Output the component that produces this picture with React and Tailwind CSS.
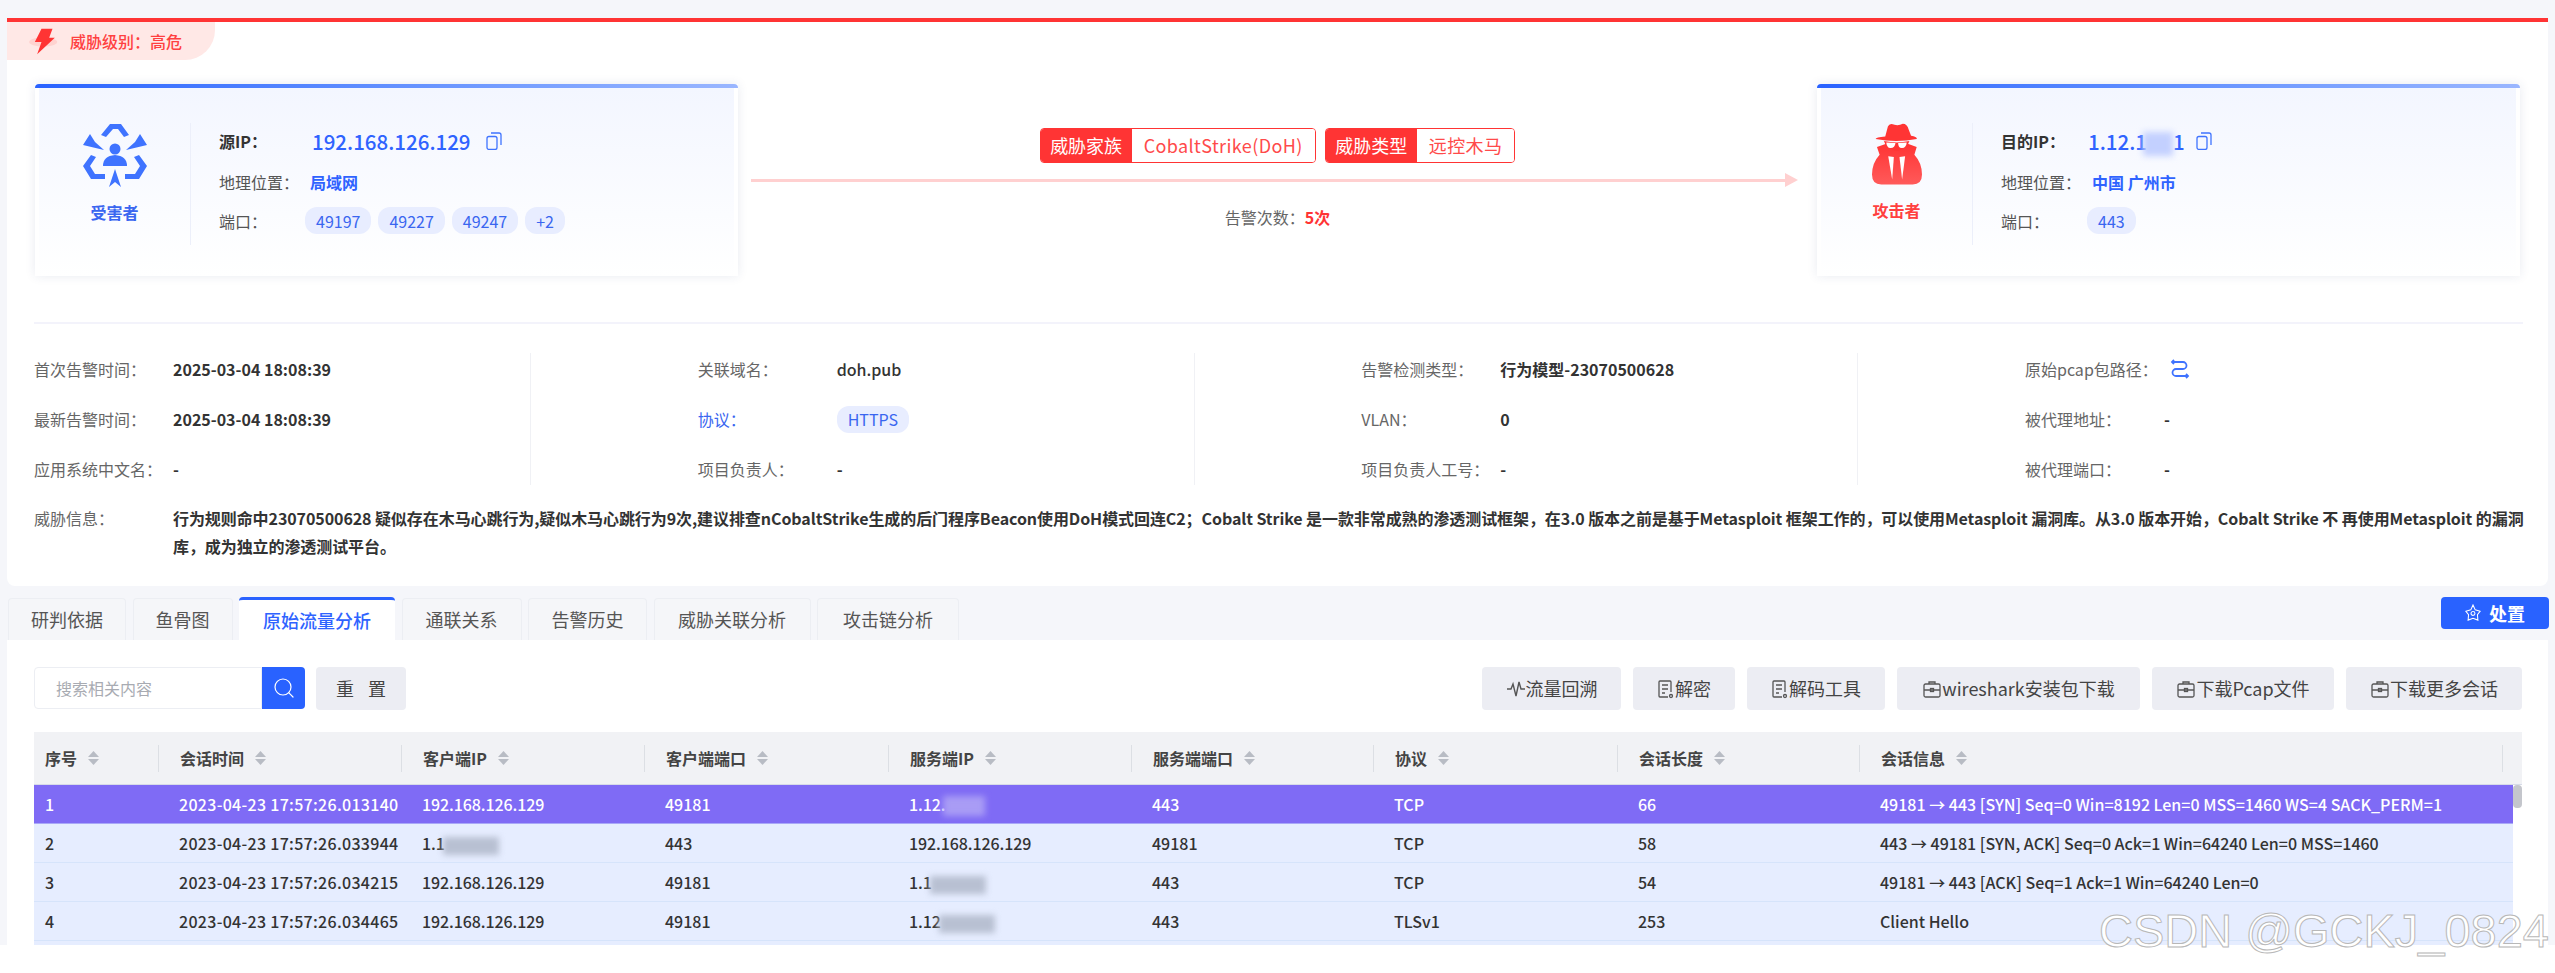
import React from "react";
import { Search } from "lucide-react";

const BoltIcon = () => (
  <svg viewBox="85 80 95 90" className="w-[32px] h-[30px] shrink-0">
    <ellipse cx="130" cy="128" rx="42" ry="14" fill="#ffd3d0" />
    <polygon points="125,88 158,88 148,115 165,115 112,165 125,128 105,128" fill="#ff3434" />
  </svg>
);

const VictimIcon = () => (
  <svg viewBox="0 0 64 64" className="w-[64px] h-[64px]" fill="#3f73ff">
    <polygon points="18,12 27,1 38,1 46,12 41,14 35,6 30,6 23,14" />
    <polygon points="0,22 7,11 12,19 21,27" />
    <polygon points="64,22 57,11 52,19 43,27" />
    <polygon points="32,46 26,64 32,59 38,64" />
    <polygon points="8,32 0,43 8,56 22,56 22,51 12,51 7,43 13,34" />
    <polygon points="56,32 64,43 56,56 42,56 42,51 52,51 57,43 51,34" />
    <circle cx="32" cy="26" r="5.5" />
    <path d="M20 43 Q20 33 32 32 Q44 33 44 43 Z" />
  </svg>
);

const AttackerIcon = () => (
  <svg viewBox="97 70 151 186" className="w-[50px] h-[62px]">
    <defs>
      <linearGradient id="coat" x1="0" y1="0" x2="0" y2="1">
        <stop offset="0" stopColor="#ff3434" />
        <stop offset="1" stopColor="#ff5a5a" />
      </linearGradient>
    </defs>
    <path fill="#ff3434" d="M137 110 L145 80 Q150 68 165 75 Q178 78 190 72 Q203 72 208 90 L215 108 Q235 112 232 118 Q170 130 108 118 Q107 112 137 110 Z" />
    <path fill="#ff3434" d="M133 124 Q172 132 210 124 L205 135 Q190 165 172 165 Q150 165 138 135 Z" />
    <path fill="url(#coat)" d="M120 165 Q97 190 97 225 Q97 255 125 255 L220 255 Q248 255 248 225 Q248 190 225 165 L232 142 L205 132 Q172 175 140 132 L112 142 Z" />
    <path fill="#fff" d="M140 128 L168 130 Q166 146 152 145 Q142 144 140 128 Z" />
    <path fill="#fff" d="M176 130 L202 128 Q200 144 188 145 Q176 146 176 130 Z" />
    <path fill="#fff" d="M146 170 L163 172 L158 240 Z" />
    <path fill="#fff" d="M180 172 L197 170 L188 240 Z" />
  </svg>
);

const CopyIcon = () => (
  <svg viewBox="0 0 16 18" className="w-[16px] h-[18px] shrink-0" fill="none" stroke="#3f73ff" strokeWidth="1.3">
    <rect x="1" y="4.5" width="10" height="13" rx="2" />
    <path d="M5 1h8a2 2 0 0 1 2 2v10" />
  </svg>
);

const SwapIcon = () => (
  <svg viewBox="0 0 20 20" className="w-[20px] h-[20px] ml-[11px]" fill="none" stroke="#3f73ff" strokeWidth="1.8">
    <path d="M2 3h11a3.5 3.5 0 0 1 0 7H6a3.5 3.5 0 0 0 0 7h12" />
    <path d="M4 1L2 3l2 2M16 15l2 2-2 2" />
  </svg>
);

const SortIcon = () => (
  <svg viewBox="0 0 13 14" className="w-[13px] h-[14px] ml-[10px] shrink-0" fill="#b8bcc4">
    <polygon points="6.5,0 12,6 1,6" />
    <polygon points="6.5,14 12,8 1,8" />
  </svg>
);

const PulseIcon = () => (
  <svg viewBox="0 0 20 20" className="w-[20px] h-[20px]" fill="none" stroke="#555" strokeWidth="1.4">
    <path d="M1 10h4l2-5 3 12 3-14 2 7h4" />
  </svg>
);

const DocIcon = () => (
  <svg viewBox="0 0 18 20" className="w-[18px] h-[20px]" fill="none" stroke="#555" strokeWidth="1.3">
    <path d="M11 18H3a1 1 0 0 1-1-1V3a1 1 0 0 1 1-1h10a1 1 0 0 1 1 1v10" />
    <path d="M5 6h6M5 10h6M5 14h3" />
    <circle cx="14" cy="17" r="1.5" />
  </svg>
);

const BoxIcon = () => (
  <svg viewBox="0 0 20 20" className="w-[20px] h-[20px]" fill="none" stroke="#555" strokeWidth="1.3">
    <rect x="2" y="5" width="16" height="13" rx="1.5" />
    <path d="M7 5V3h6v2M2 11h16" />
    <rect x="8.5" y="9.5" width="3" height="3" />
  </svg>
);

const ActionIcon = () => (
  <svg viewBox="0 0 18 20" className="w-[16px] h-[18px]" fill="none" stroke="#fff" strokeWidth="1.2">
    <path d="M9 1l2.5 5.5L17 8l-3 4 .5 6-5.5-2-5.5 2 .5-6-3-4 5.5-1.5z" />
    <circle cx="9" cy="10.5" r="2.2" />
  </svg>
);

function Blur({ className }) {
  return <span className={`inline-block align-middle blur-[3px] ${className}`} />;
}

function HostCard({ icon, role, roleClass, children }) {
  return (
    <div className="w-[703px] h-[192px] shrink-0 shadow-[0_0_10px_rgba(40,60,120,0.10)] bg-white">
      <div className="h-[4px] rounded-t-sm bg-gradient-to-r from-[#2a62ff] to-[#9ab6ff]" />
      <div className="h-[188px] mx-[4px] pt-[35px] flex items-start bg-gradient-to-b from-[#f3f6ff] to-white">
        <div className="w-[152px] h-[122px] border-r border-[#eceffa] flex flex-col items-center">
          {icon}
          <div className={`mt-[13px] text-[16px] leading-[24px] font-bold ${roleClass}`}>{role}</div>
        </div>
        <div className="pl-[28px] flex flex-col">{children}</div>
      </div>
    </div>
  );
}

function HostRow({ label, strong, children }) {
  return (
    <div className={strong ? "h-[39px] pb-[3px] flex items-center text-[16px]" : "h-[39px] flex items-center text-[16px]"}>
      <div className={strong ? "w-[86px] font-bold text-[#333]" : "w-[86px] text-[#555]"}>{label}</div>
      {children}
    </div>
  );
}

function Chip({ children }) {
  return (
    <span className="h-[27px] px-[11px] rounded-[12px] bg-[#e8edff] text-[#3a66f0] text-[16px] flex items-center">
      {children}
    </span>
  );
}

function Tag({ name, value }) {
  return (
    <div className="h-[35px] flex border border-[#ff3434] rounded-[4px] overflow-hidden text-[18px]">
      <div className="w-[91px] bg-[#ff3434] text-white flex items-center justify-center">{name}</div>
      <div className="px-[12px] bg-white text-[#ff4a4a] tracking-[0.4px] flex items-center">{value}</div>
    </div>
  );
}

function Field({ label, labelClass = "text-[#666]", width = "w-[139px]", children }) {
  return (
    <div className="h-[32px] flex items-center text-[16px]">
      <div className={`${width} shrink-0 ${labelClass}`}>{label}</div>
      {children}
    </div>
  );
}

const V = ({ children }) => <div className="font-bold text-[#333]">{children}</div>;

const tabs = [
  { name: "研判依据", w: "w-[118px]" },
  { name: "鱼骨图", w: "w-[100px]" },
  { name: "原始流量分析", w: "w-[156px]", active: true },
  { name: "通联关系", w: "w-[120px]" },
  { name: "告警历史", w: "w-[119px]" },
  { name: "威胁关联分析", w: "w-[157px]" },
  { name: "攻击链分析", w: "w-[142px]" },
];

const tools = [
  { name: "流量回溯", w: "w-[139px]", icon: <PulseIcon /> },
  { name: "解密", w: "w-[102px]", icon: <DocIcon /> },
  { name: "解码工具", w: "w-[138px]", icon: <DocIcon /> },
  { name: "wireshark安装包下载", w: "w-[243px]", icon: <BoxIcon /> },
  { name: "下载Pcap文件", w: "w-[182px]", icon: <BoxIcon /> },
  { name: "下载更多会话", w: "w-[176px]", icon: <BoxIcon /> },
];

const columns = ["序号", "会话时间", "客户端IP", "客户端端口", "服务端IP", "服务端端口", "协议", "会话长度"];
const gridCols = "grid grid-cols-[124px_243px_243px_244px_243px_242px_244px_242px_1fr]";

const grayBlur = "w-[56px] h-[18px] bg-[#b8c0d2] -ml-[2px]";

const rows = [
  {
    no: "1",
    time: "2023-04-23 17:57:26.013140",
    client: "192.168.126.129",
    cport: "49181",
    server: (
      <>
        1.12.
        <Blur className="w-[42px] h-[20px] bg-[#a99cf5] -ml-[2px]" />
      </>
    ),
    sport: "443",
    proto: "TCP",
    len: "66",
    info: "49181 → 443 [SYN] Seq=0 Win=8192 Len=0 MSS=1460 WS=4 SACK_PERM=1",
  },
  {
    no: "2",
    time: "2023-04-23 17:57:26.033944",
    client: (
      <>
        1.1
        <Blur className={grayBlur} />
      </>
    ),
    cport: "443",
    server: "192.168.126.129",
    sport: "49181",
    proto: "TCP",
    len: "58",
    info: "443 → 49181 [SYN, ACK] Seq=0 Ack=1 Win=64240 Len=0 MSS=1460",
  },
  {
    no: "3",
    time: "2023-04-23 17:57:26.034215",
    client: "192.168.126.129",
    cport: "49181",
    server: (
      <>
        1.1
        <Blur className={grayBlur} />
      </>
    ),
    sport: "443",
    proto: "TCP",
    len: "54",
    info: "49181 → 443 [ACK] Seq=1 Ack=1 Win=64240 Len=0",
  },
  {
    no: "4",
    time: "2023-04-23 17:57:26.034465",
    client: "192.168.126.129",
    cport: "49181",
    server: (
      <>
        1.12
        <Blur className={grayBlur} />
      </>
    ),
    sport: "443",
    proto: "TLSv1",
    len: "253",
    info: "Client Hello",
  },
];

export default function App() {
  return (
    <div className="relative w-[2555px] h-[973px] overflow-hidden bg-white font-['Noto_Sans_CJK_SC','Noto_Sans',sans-serif]">
      <div className="h-[945px] bg-[#f5f6fa] px-[7px] pt-[18px] flex flex-col">
        {/* alert card */}
        <div className="h-[568px] shrink-0 border-t-4 border-[#ff3434] bg-white rounded-b-lg">
          <div className="w-[208px] h-[38px] rounded-br-[30px] bg-[#ffe8e6] flex items-center pl-[21px]">
            <BoltIcon />
            <span className="ml-[10px] text-[16px] font-medium text-[#ff4040]">威胁级别：高危</span>
          </div>

          <div className="mt-[24px] px-[28px] flex">
            <HostCard icon={<VictimIcon />} role="受害者" roleClass="text-[#3a66f0]">
              <HostRow label="源IP：" strong>
                <span className="ml-[7px] text-[20.5px] font-medium text-[#2f63ff]">192.168.126.129</span>
                <span className="ml-[15px]">
                  <CopyIcon />
                </span>
              </HostRow>
              <HostRow label="地理位置：">
                <span className="ml-[5px] font-bold text-[#2f63ff]">局域网</span>
              </HostRow>
              <HostRow label="端口：">
                <div className="flex gap-[7px]">
                  <Chip>49197</Chip>
                  <Chip>49227</Chip>
                  <Chip>49247</Chip>
                  <Chip>+2</Chip>
                </div>
              </HostRow>
            </HostCard>

            <div className="flex-1 flex flex-col items-center pt-[44px]">
              <div className="flex gap-[9px]">
                <Tag name="威胁家族" value="CobaltStrike(DoH)" />
                <Tag name="威胁类型" value="远控木马" />
              </div>
              <div className="mt-[10px] self-stretch ml-[13px] mr-[19px] flex items-center">
                <div className="flex-1 h-[3px] bg-[#ffd0d0]" />
                <div className="w-0 h-0 border-y-[7px] border-y-transparent border-l-[13px] border-l-[#ffd0d0]" />
              </div>
              <div className="mt-[18px] text-[16px] leading-[24px] text-[#666]">
                告警次数：<span className="font-bold text-[#ff3434]">5次</span>
              </div>
            </div>

            <HostCard icon={<AttackerIcon />} role="攻击者" roleClass="text-[#ff4040]">
              <HostRow label="目的IP：" strong>
                <span className="ml-[1px] text-[20.5px] font-medium text-[#2f63ff] whitespace-nowrap">
                  1.12.1
                  <Blur className="w-[30px] h-[24px] bg-[#c3d0ff] -ml-[4px]" />1
                </span>
                <span className="ml-[11px]">
                  <CopyIcon />
                </span>
              </HostRow>
              <HostRow label="地理位置：">
                <span className="ml-[5px] font-bold text-[#2f63ff]">中国 广州市</span>
              </HostRow>
              <HostRow label="端口：">
                <Chip>443</Chip>
              </HostRow>
            </HostCard>
          </div>

          <div className="mt-[46px] ml-[27px] w-[2489px] border-b-2 border-[#f3f3fb]" />

          {/* detail fields */}
          <div className="mt-[29px] ml-[27px] flex">
            <div className="w-[663.67px]">
              <div className="w-[497px] border-r border-[#f0f1f5] flex flex-col gap-[18px]">
                <Field label="首次告警时间："><V>2025-03-04 18:08:39</V></Field>
                <Field label="最新告警时间："><V>2025-03-04 18:08:39</V></Field>
                <Field label="应用系统中文名："><V>-</V></Field>
              </div>
            </div>
            <div className="w-[663.67px]">
              <div className="w-[497px] border-r border-[#f0f1f5] flex flex-col gap-[18px]">
                <Field label="关联域名："><div className="font-medium text-[#333]">doh.pub</div></Field>
                <Field label="协议：" labelClass="text-[#3a66f0]">
                  <span className="h-[27px] px-[11px] rounded-[12px] bg-[#e8edff] text-[#3a66f0] flex items-center">HTTPS</span>
                </Field>
                <Field label="项目负责人："><V>-</V></Field>
              </div>
            </div>
            <div className="w-[663.67px]">
              <div className="w-[497px] border-r border-[#f0f1f5] flex flex-col gap-[18px]">
                <Field label="告警检测类型："><V>行为模型-23070500628</V></Field>
                <Field label="VLAN："><V>0</V></Field>
                <Field label="项目负责人工号："><V>-</V></Field>
              </div>
            </div>
            <div className="flex flex-col gap-[18px]">
              <Field label="原始pcap包路径：" width="w-[134px]"><SwapIcon /></Field>
              <Field label="被代理地址："><V>-</V></Field>
              <Field label="被代理端口："><V>-</V></Field>
            </div>
          </div>

          <div className="mt-[19px] ml-[27px] flex text-[16px] leading-[28px]">
            <div className="w-[139px] shrink-0 text-[#666]">威胁信息：</div>
            <div className="font-bold text-[#333] whitespace-nowrap tracking-[-0.08px]">
              行为规则命中23070500628 疑似存在木马心跳行为,疑似木马心跳行为9次,建议排查nCobaltStrike生成的后门程序Beacon使用DoH模式回连C2；Cobalt Strike 是一款非常成熟的渗透测试框架，在3.0 版本之前是基于Metasploit 框架工作的，可以使用Metasploit 漏洞库。从3.0 版本开始，Cobalt Strike 不 再使用Metasploit 的漏洞
              <br />
              库，成为独立的渗透测试平台。
            </div>
          </div>
        </div>

        {/* tabs */}
        <div className="mt-[11px] h-[43px] shrink-0 flex justify-between">
          <div className="flex items-end gap-[6.5px] pl-[1px]">
            {tabs.map((t) =>
              t.active ? (
                <div key={t.name} className={`${t.w} h-[43px] border-t-[3px] border-[#2a62ff] rounded-t bg-white text-[18px] font-medium text-[#2f63ff] flex items-center justify-center`}>
                  {t.name}
                </div>
              ) : (
                <div key={t.name} className={`${t.w} h-[42px] border border-b-0 border-[#eceef3] rounded-t bg-[#f5f6f9] text-[18px] text-[#555] flex items-center justify-center`}>
                  {t.name}
                </div>
              )
            )}
          </div>
          <button className="w-[108px] h-[32px] -mr-px rounded bg-[#2962ff] text-white text-[18px] font-bold flex items-center justify-center gap-[8px]">
            <ActionIcon />
            处置
          </button>
        </div>

        {/* tab panel */}
        <div className="flex-1 min-h-0 bg-white pl-[27px] pr-[26px] pt-[27px] flex flex-col">
          <div className="h-[43px] shrink-0 flex justify-between">
            <div className="flex gap-[11px]">
              <div className="w-[271px] h-[42px] flex">
                <div className="flex-1 border border-[#eceef3] rounded-l pl-[21px] text-[16px] text-[#a8abb2] flex items-center bg-white">
                  搜索相关内容
                </div>
                <div className="w-[43px] bg-[#2962ff] rounded-r flex items-center justify-center">
                  <Search className="w-[24px] h-[24px] text-white" strokeWidth={1.2} />
                </div>
              </div>
              <div className="w-[90px] rounded bg-[#ecedf3] text-[18px] text-[#444] flex items-center justify-center gap-[14px]">
                <span>重</span>
                <span>置</span>
              </div>
            </div>
            <div className="flex gap-[12px]">
              {tools.map((t) => (
                <div key={t.name} className={`${t.w} rounded bg-[#ecedf3] text-[18px] text-[#444] flex items-center justify-center`}>
                  {t.icon}
                  {t.name}
                </div>
              ))}
            </div>
          </div>

          {/* table */}
          <div className="mt-[22px] flex-1 min-h-0 flex flex-col overflow-hidden text-[16px]">
            <div className={`${gridCols} h-[53px] shrink-0 bg-[#f1f2f5] border-b border-[#d7dbe8] font-semibold text-[#444]`}>
              <div className="pl-[11px] flex items-center">
                序号
                <SortIcon />
              </div>
              {columns.slice(1).map((c) => (
                <div key={c} className="flex items-center">
                  <div className="h-[27px] pl-[21px] border-l border-[#dcdfe4] flex items-center">
                    {c}
                    <SortIcon />
                  </div>
                </div>
              ))}
              <div className="flex items-center">
                <div className="w-[644px] h-[27px] pl-[21px] border-x border-[#dcdfe4] flex items-center">
                  会话信息
                  <SortIcon />
                </div>
              </div>
            </div>
            <div className="flex-1 min-h-0 flex">
              <div className="flex-1 flex flex-col bg-[#e6edff]">
                {rows.map((r) => (
                  <div
                    key={r.no}
                    className={
                      r.no === "1"
                        ? `${gridCols} h-[39px] shrink-0 items-center bg-[#7f6bf5] border-b border-[#a9a8f8] text-white font-medium`
                        : `${gridCols} h-[39px] shrink-0 items-center border-b border-[#d6e4fb] text-[#333] font-medium`
                    }
                  >
                    <div className="pl-[11px]">{r.no}</div>
                    <div className="pl-[21px] whitespace-nowrap tracking-[0.3px]">{r.time}</div>
                    <div className="pl-[21px] whitespace-nowrap tracking-[-0.1px]">{r.client}</div>
                    <div className="pl-[21px]">{r.cport}</div>
                    <div className="pl-[21px] whitespace-nowrap tracking-[-0.1px]">{r.server}</div>
                    <div className="pl-[21px]">{r.sport}</div>
                    <div className="pl-[21px]">{r.proto}</div>
                    <div className="pl-[21px]">{r.len}</div>
                    <div className="pl-[21px] whitespace-nowrap">{r.info}</div>
                  </div>
                ))}
              </div>
              <div className="w-[9px] shrink-0">
                <div className="h-[23px] rounded bg-[#c4c6cc]" />
              </div>
            </div>
          </div>
        </div>
      </div>

      {/* image watermark */}
      <div className="absolute right-[6px] top-[903px] text-[47px] leading-[56px] whitespace-nowrap text-white font-['Liberation_Sans',sans-serif] [-webkit-text-stroke:1px_#b8b8b8]">
        CSDN @GCKJ_0824
      </div>
    </div>
  );
}
